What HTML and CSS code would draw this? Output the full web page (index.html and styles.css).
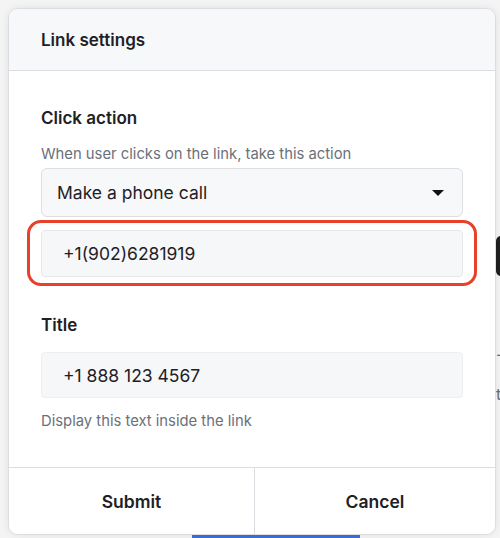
FILE: index.html
```html
<!DOCTYPE html>
<html lang="en">
<head>
    <meta charset="UTF-8">
    <meta name="viewport" content="width=device-width, initial-scale=1.0">
    <title>Link settings</title>
    <link rel="stylesheet" href="styles.css">
</head>
<body>
    <div class="backdrop">
        <div class="peek-box"></div>
        <span class="peek-text peek-one">-</span>
        <span class="peek-text peek-two">t</span>
        <div class="peek-bar"></div>
    </div>

    <div class="dialog">
        <div class="dialog-header">Link settings</div>

        <div class="dialog-body">
            <div class="field-label">Click action</div>
            <div class="field-help top">When user clicks on the link, take this action</div>
            <div class="select">
                <span>Make a phone call</span>
                <span class="caret"></span>
            </div>
            <div class="highlight">
                <div class="input">+1(902)6281919</div>
            </div>

            <div class="field-label title-label">Title</div>
            <div class="input title-input">+1 888 123 4567</div>
            <div class="field-help bottom">Display this text inside the link</div>
        </div>

        <div class="dialog-footer">
            <button class="footer-btn">Submit</button>
            <button class="footer-btn">Cancel</button>
        </div>
    </div>
</body>
</html>
```

FILE: styles.css
```css
html, body {
    height: 100%;
}
body {
    margin: 0;
    padding: 8px 0 0 8px;
    box-sizing: border-box;
    background-color: #f4f4f5;
    font-family: Inter, Roboto, "Liberation Sans", Arial, sans-serif;
    color: #1d2126;
    overflow: hidden;
    position: relative;
}
.backdrop {
    position: absolute;
    inset: 0;
}
.peek-box {
    position: absolute;
    left: 496px;
    top: 236px;
    width: 12px;
    height: 40px;
    border-radius: 5px;
    background-color: #1f1f1f;
}
.peek-text {
    position: absolute;
    left: 496px;
    font-size: 16px;
    color: #6b6f76;
}
.peek-one {
    top: 344px;
}
.peek-two {
    top: 384px;
}
.peek-bar {
    position: absolute;
    left: 192px;
    top: 533px;
    width: 168px;
    height: 5px;
    background-color: #3b6fd9;
}
.dialog {
    position: relative;
    width: 486px;
    background-color: #fff;
    border: 1px solid #dcdde2;
    border-radius: 10px;
    box-shadow: 0 0 8px rgba(0, 0, 0, 0.08);
    overflow: hidden;
}
.dialog-header {
    height: 61px;
    padding: 0 32px;
    display: flex;
    align-items: center;
    background-color: #f7f8fa;
    border-bottom: 1px solid #dcdde2;
    font-size: 17px;
    font-weight: 600;
}
.dialog-body {
    padding: 36px 32px 36px 32px;
}
.field-label {
    font-size: 17px;
    font-weight: 600;
    line-height: 22px;
}
.field-help {
    font-size: 14.8px;
    line-height: 20px;
    color: #6b7079;
}
.field-help.top {
    margin-top: 15px;
}
.field-help.bottom {
    margin-top: 13px;
}
.select {
    margin-top: 4px;
    height: 49px;
    box-sizing: border-box;
    padding: 0 15px;
    display: flex;
    align-items: center;
    justify-content: space-between;
    background-color: #f7f8fa;
    border: 1px solid #dcdee2;
    border-radius: 6px;
    font-size: 17.5px;
}
.caret {
    width: 0;
    height: 0;
    margin-right: 3px;
    border-left: 6px solid transparent;
    border-right: 6px solid transparent;
    border-top: 6px solid #111;
}
.highlight {
    margin: 3px -14px 0 -14px;
    padding: 7px 11px 6px 11px;
    border: 3px solid #e8412b;
    border-radius: 14px;
}
.input {
    height: 47px;
    box-sizing: border-box;
    padding: 0 21px;
    display: flex;
    align-items: center;
    background-color: #f6f7f9;
    border: 1px solid #e6e7eb;
    border-radius: 4px;
    font-size: 17.5px;
}
.title-label {
    margin-top: 28px;
}
.title-input {
    margin-top: 16px;
    height: 46px;
    border-color: #eceef1;
}
.dialog-footer {
    display: grid;
    grid-template-columns: 245px 1fr;
    height: 66px;
    border-top: 1px solid #dcdde2;
}
.footer-btn {
    border: none;
    background-color: #fff;
    font-family: inherit;
    font-size: 17.5px;
    font-weight: 600;
    color: #1d2126;
    cursor: pointer;
}
.footer-btn + .footer-btn {
    border-left: 1px solid #dcdde2;
}
```
